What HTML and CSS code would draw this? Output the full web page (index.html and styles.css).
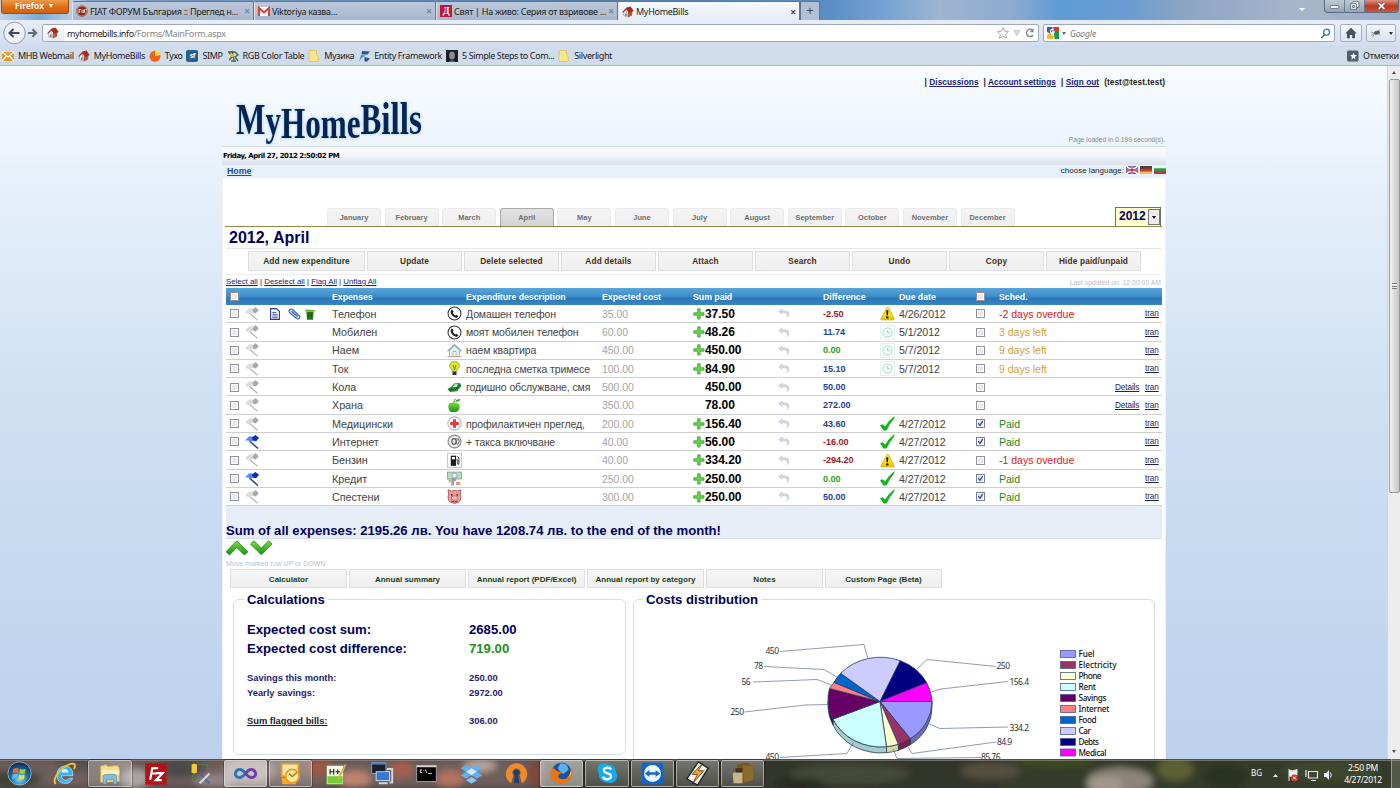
FILE: index.html
```html
<!DOCTYPE html>
<html lang="en">
<head>
<meta charset="utf-8">
<title>MyHomeBills</title>
<link rel="stylesheet" href="styles.css">
</head>
<body>
<svg class="defs" width="0" height="0">
  <defs>
    <linearGradient id="gGreen" x1="0" y1="0" x2="0" y2="1"><stop offset="0" stop-color="#7be03a"/><stop offset="1" stop-color="#16901a"/></linearGradient>
    <linearGradient id="gYellow" x1="0" y1="0" x2="0" y2="1"><stop offset="0" stop-color="#fff45a"/><stop offset="1" stop-color="#ecc400"/></linearGradient>
    <radialGradient id="gOrb" cx=".5" cy=".75" r=".7"><stop offset="0" stop-color="#6fe0f5"/><stop offset=".5" stop-color="#1f74ae"/><stop offset="1" stop-color="#0d2f57"/></radialGradient>
    <filter id="blur" x="-20%" y="-50%" width="140%" height="200%"><feGaussianBlur stdDeviation="3.5"/></filter>
    <symbol id="house" viewBox="0 0 12 12"><path d="M1 6 L4 4 L6 11 L2 10Z" fill="#e9edf2" stroke="#8d949c" stroke-width=".6"/><path d="M6 5 L10.5 5.5 L10 9.5 L6 11.5Z" fill="#b85a3a"/><path d="M.4 6 L4.5 1.6 L8.5 .6 L11.8 5 L7.5 7 L4.2 3.6 L1 7Z" fill="#a42d1c"/><path d="M3 7.5h1.6v2.6L3 9.8z" fill="#6e7a86"/></symbol>
    <symbol id="flagGrey" viewBox="0 0 15 14"><path d="M4.8 6.5 L12.5 13.3" stroke="#b4b4b4" stroke-width="1.2"/><path d="M0 5.4 L3.8 1.6 L7.6 1.2 L8 5.5 L3.4 7.3Z" fill="#dcdcdc"/><path d="M7.5 2.8 L10.6 0 L13.8 3.2 L10.8 6.5 L8 5.6Z" fill="#a9a9a9"/></symbol>
    <symbol id="flagBlue" viewBox="0 0 15 14"><path d="M4.6 6.3 L13 13.5" stroke="#24419e" stroke-width="1.5"/><path d="M0 5.4 L3.8 1.6 L7.6 1.2 L8.3 5.5 L4.6 7.8 L3.6 5.6Z" fill="#5b86f0"/><path d="M7 2.4 L10.4 0 L14 2.8 L11.2 6.3 L7.8 5.6Z" fill="#0a2bb4"/></symbol>
    <symbol id="phone" viewBox="0 0 16 16"><circle cx="8" cy="8" r="6.9" fill="#fff" stroke="#333" stroke-width="1.1"/><path d="M5.3 3.5 L7 5.8 L6.2 7 Q6.8 9 9 10.1 L10.2 9.4 L12.2 11.2 Q10.9 13.2 8.6 12.2 Q4.5 10.3 3.9 6.6 Q3.8 4.4 5.3 3.5Z" fill="#222"/></symbol>
    <symbol id="home" viewBox="0 0 15 14"><path d="M2.5 6.8 L7.5 2.3 L12.5 6.8 V13 H2.5Z" fill="#e4f4ea" stroke="#7db6a6" stroke-width=".8"/><path d="M.6 7.7 L7.5 1.2 L14.4 7.7" fill="none" stroke="#82aebd" stroke-width="1.3"/><path d="M6 8h3v5H6z" fill="#fff" stroke="#6c8a92" stroke-width=".6"/><path d="M.5 13.2h14" stroke="#e0a37c"/></symbol>
    <symbol id="bulb" viewBox="0 0 12 15"><path d="M6 .6 Q11 .8 10.9 4.9 Q10.6 7.2 8.4 9 V10.5 H3.6 V9 Q1.2 7.2 1.1 4.9 Q1 .8 6 .6Z" fill="#dbe935" stroke="#8c9a12" stroke-width=".7"/><path d="M4.5 4l1.5 5 1.5-5" fill="none" stroke="#5a5a10" stroke-width=".7"/><path d="M4 10.6h4v3.4H4z" fill="#333"/></symbol>
    <symbol id="car" viewBox="0 0 15 10"><path d="M.5 6.6 L4 4.6 L7 1 L13 .6 L14.5 3.6 L10 8.8 L3 9.4Z" fill="#278a32"/><path d="M5.4 4.4 L7.8 1.8 L11 1.5 L9.6 4.4Z" fill="#c8ecd0"/><path d="M2 7h3.6M7.5 7.8l5-4.5" stroke="#114d1b"/></symbol>
    <symbol id="apple" viewBox="0 0 14 15"><path d="M6.400 5 Q1 3.2 .8 8.400 Q1 13.7 4.6 14.2 L6.2 13.8 L8 14.2 Q12 12.8 12.200 8.400 Q11.5 3.600 6.4 5Z" fill="url(#gGreen)"/><path d="M6.3 5 Q6.5 2 8 .8" stroke="#5b6b20" fill="none"/><path d="M7.6 3.6 Q8.5 1 13 1 Q12 4.2 7.6 3.6Z" fill="#3d9c22"/></symbol>
    <symbol id="cross" viewBox="0 0 14 14"><circle cx="7" cy="7" r="6.2" fill="#fff" stroke="#b3b8bd"/><path d="M5.6 3h2.8v2.600h2.600v2.800H8.400v2.600H5.600V8.400H3V5.600h2.600z" fill="#e83a3a"/></symbol>
    <symbol id="atmark" viewBox="0 0 14 14"><circle cx="7" cy="7" r="6" fill="#ececec" stroke="#8a8a8a" stroke-width="1.1"/><ellipse cx="6.5" cy="7" rx="2" ry="2.7" fill="none" stroke="#555" stroke-width="1"/><path d="M9.3 3.900 L8.700 8.900 Q9.500 10.300 11 8.500 Q12 5.500 10 3.700" fill="none" stroke="#666" stroke-width=".9"/></symbol>
    <symbol id="pump" viewBox="0 0 14 14"><rect x=".5" y=".5" width="13" height="13" fill="#fff" stroke="#c9c9c9"/><path d="M3.500 2.500h5v9.500h-5z" fill="#1c1c1c"/><path d="M4.600 3.700h2.800v2.200H4.600z" fill="#fff"/><path d="M8.600 6.500h1.500v4h1V4.600L9.500 3" fill="none" stroke="#222" stroke-width=".8"/></symbol>
    <symbol id="credit" viewBox="0 0 14 14"><rect x=".4" y="1" width="13" height="6.500" fill="#b6dcc0" stroke="#6d9e80" stroke-width=".7"/><circle cx="7" cy="4.200" r="2.300" fill="#f0f6f0" stroke="#7a8ea8" stroke-width=".6"/><path d="M4 6.500h4.500V9L6.500 10v3.500H4z" fill="#91a3b8"/><path d="M1.500 8h2v2.500h-2zM8.500 10h4v3h-4z" fill="#dba066"/></symbol>
    <symbol id="pig" viewBox="0 0 15 15"><path d="M1 .8 L4.500 2 Q7.500 1 10.500 2 L14 .8 L13.400 5 Q15 11 11.500 13.300 Q7.500 15.500 3.500 13.300 Q0 11 1.600 5Z" fill="#ef9a96" stroke="#a34c4c" stroke-width=".8"/><circle cx="4.800" cy="5.800" r=".9" fill="#402020"/><circle cx="10.200" cy="5.800" r=".9" fill="#402020"/><ellipse cx="7.500" cy="9" rx="3.200" ry="2.100" fill="#f9c2be" stroke="#a34c4c" stroke-width=".6"/><path d="M4 12q3.500 1.800 7 0" fill="none" stroke="#943c3c"/></symbol>
    <symbol id="plus" viewBox="0 0 12 12"><path d="M4.700 .8h2.400v4H11v2.400H7.100V11H4.700V7.200H.8V4.800h3.900z" fill="#6ad648" stroke="#36a030" stroke-width=".8"/></symbol>
    <symbol id="undo" viewBox="0 0 12 11"><path d="M0 3.500 L4.600 .3 V2.300 Q11.500 2.200 11.400 6 Q11.200 9 7.700 10.600 Q10 7.500 8.600 6 Q7.400 4.900 4.600 5 V7Z" fill="#ccd6de"/></symbol>
    <symbol id="warn" viewBox="0 0 15 14"><path d="M7.200 .8 Q8 .4 8.600 1.300 L14.200 12 Q14.400 13.300 13 13.400 H1.700 Q.5 13.300 .9 12Z" fill="url(#gYellow)" stroke="#d4b000" stroke-width=".8"/><path d="M6.200 3.800h2.200L7.900 8.800H6.700z" fill="#1c1500"/><circle cx="7.300" cy="10.900" r="1.200" fill="#1c1500"/></symbol>
    <symbol id="clock" viewBox="0 0 15 15"><rect x=".5" y=".5" width="14" height="14" fill="#fcfffe" stroke="#e0f2eb"/><circle cx="7.500" cy="7.500" r="4.600" fill="#f3fcf8" stroke="#b8e2cd" stroke-width="1.200"/><path d="M7.500 5v2.700h2.800" fill="none" stroke="#a5d4bf"/></symbol>
    <symbol id="tick" viewBox="0 0 15 15"><path d="M0 9.600 Q1 8.400 2.800 8.200 L5.100 10.600 Q8.500 4.500 14.600 0 L14.200 2.600 Q9 8.500 6.900 14 Q5 15 3.600 14.500Z" fill="#12b51a"/></symbol>
    <symbol id="minitick" viewBox="0 0 8 8"><path d="M1.300 3.600 L3.400 6.200 L6.600 1" fill="none" stroke="#3c4a8c" stroke-width="1.400"/></symbol>
    <symbol id="doc" viewBox="0 0 10 12"><path d="M.6 .6H6.500L9.400 3.500V11.400H.6Z" fill="#fff" stroke="#29369c" stroke-width="1.100"/><path d="M2.300 4.500h4M2.300 6.300h5.300M2.300 8h5.300M2.300 9.700h5.300" stroke="#3d48c4" stroke-width=".9"/></symbol>
    <symbol id="clip" viewBox="0 0 13 12"><path d="M2.500 5.500 L8.500 10.500 Q11.500 11.800 12 8.500 L5 1.800 Q2.500 .2 1.200 2.200 Q.5 3.800 2.500 5.500Z" fill="#cfe0fb" stroke="#3e66c0" stroke-width="1.200"/><path d="M3.500 3.200 L9.500 8.500" stroke="#3e66c0" stroke-width="1.300"/></symbol>
    <symbol id="bin" viewBox="0 0 10 12"><path d="M1.300 3.500h7.400L8 11.700H2z" fill="#2c7c18"/><path d="M.2 1.500 L9.800 2 V3.600H.3Z" fill="#6eb82c"/><path d="M3.700 4.500v6M6 4.500v6" stroke="#145208" stroke-width=".9"/></symbol>
    <symbol id="note" viewBox="0 0 11 12"><path d="M.5 1 Q.5 .5 1 .5H7.500Q8 .5 8 1V5L9.800 6.500V11L9 11.500H1Q.5 11.500 .5 11Z" fill="#f9e68c" stroke="#d9be5c" stroke-width=".8"/></symbol>
  </defs>
</svg>

<div class="window">
  <div class="tabstrip">
    <div class="ffbutton">Firefox <i></i></div>
    <div class="btab first"><svg class="fav" viewBox="0 0 12 12"><circle cx="6" cy="6" r="5.700" fill="#8b2a16"/><circle cx="6" cy="6" r="5" fill="none" stroke="#e7d3cc" stroke-width=".6"/><path d="M3 4.500v3.500M3 4.500h1.600M3 6h1.300M6 4.500v3.500M7.300 8l.8-3.500.8 3.500M9.300 4.500h1.500" stroke="#fff" stroke-width=".8" fill="none"/></svg><span>FIAT ФОРУМ България :: Преглед н...</span><b>×</b></div>
    <div class="btab"><svg class="fav" viewBox="0 0 12 12"><rect y="2" width="12" height="9" fill="#fff"/><path d="M1 11V3l5 4.500L11 3v8" fill="none" stroke="#d93a34" stroke-width="1.900"/></svg><span>Viktoriya казва...</span><b>×</b></div>
    <div class="btab"><span class="fav dnevnik">Д</span><span>Свят | На живо: Серия от взривове ...</span><b>×</b></div>
    <div class="btab active"><svg class="fav"><use href="#house"/></svg><span>MyHomeBills</span><b>×</b></div>
    <div class="newtab">+</div>
    <div class="winctl"><i class="tri"></i><div class="wbtns"><span><svg viewBox="0 0 20 12"><rect x="5.500" y="5.500" width="9" height="3" rx=".5" fill="#fff" stroke="#687486"/></svg></span><span><svg viewBox="0 0 20 12"><path d="M8 1.500h6.500v6H12M6 3.500h6v6H6zM8 5.500h2v2H8z" fill="#fff" stroke="#5f6b7c"/></svg></span><span class="close"><svg viewBox="0 0 20 12"><path d="M7 3l6 6M13 3L7 9" stroke="#684040" stroke-width="3.200"/><path d="M7 3l6 6M13 3L7 9" stroke="#fff" stroke-width="2"/></svg></span></div></div>
  </div>
  <div class="toolbar">
    <svg class="navbtns" viewBox="0 0 42 24"><circle cx="14.500" cy="12" r="10.800" fill="#eef2f8" stroke="#8b98ad" stroke-width="1"/><path d="M9.500 12h10M13.500 8l-4 4 4 4" fill="none" stroke="#3f4a59" stroke-width="2"/><path d="M28 12h8M32.500 8.300l3.700 3.700-3.700 3.700" fill="none" stroke="#5d6a80" stroke-width="2"/></svg>
    <div class="urlbar"><span class="ubadge"><svg class="fav"><use href="#house"/></svg></span><span class="url">myhomebills.info<em>/Forms/MainForm.aspx</em></span>
      <svg class="uicons" viewBox="0 0 42 14"><path d="M7 1.500l1.600 3.700 4 .3-3 2.700 1 4L7 10l-3.600 2.200 1-4-3-2.700 4-.3z" fill="#fff" stroke="#a7adb5"/><path d="M18 4.500h6l-3 5z" fill="#dde1e6" stroke="#b5bac2" stroke-width=".8"/><path d="M36.500 4.300A3.600 3.600 0 1 0 37 9" fill="none" stroke="#858e9a" stroke-width="1.500"/><path d="M37.600 2v4.200h-4.200z" fill="#858e9a"/></svg></div>
    <div class="searchbar"><svg class="goog" viewBox="0 0 12 12"><rect width="12" height="12" rx="1" fill="#fff"/><path d="M6.500 0H12V4L9 5.500 6 3z" fill="#e03225"/><path d="M7 5.500L12 4v8H7.500z" fill="#16994b"/><path d="M0 0h5.500v5L3 6.500 0 5z" fill="#2f62cf"/><path d="M0 8l3-2 4 3-1 3H0z" fill="#f5bb20"/><path d="M6.500 2.500Q3 2 3.500 5 6 7 4.500 8" fill="none" stroke="#fff" stroke-width="1.300"/></svg><i class="caret"></i><span>Google</span><svg class="mag" viewBox="0 0 12 12"><circle cx="7.200" cy="4.500" r="3.200" fill="#fff" stroke="#3473bd" stroke-width="1.400"/><path d="M5 7L1.500 11" stroke="#3473bd" stroke-width="1.700"/></svg></div>
    <div class="tbtn home"><svg viewBox="0 0 12 12"><path d="M6 .8L11.800 6.500H10v4.700H7.200V8H4.800v3.200H2V6.500H.2z" fill="#47525f"/></svg></div>
    <div class="tbtn bug"><svg viewBox="0 0 14 12"><path d="M4 7Q5 3 9 3.500Q13 4 11 7Q7 9 4 7Z" fill="#555c63"/><path d="M1 5l4 1-4 3M5 7L3 11M9 7l3 1M8 4l4-2" fill="none" stroke="#858b91" stroke-width=".9"/></svg><u></u></div>
  </div>
  <div class="bookmarks">
    <span class="bm"><svg viewBox="0 0 12 12"><rect y="2" width="12" height="9" fill="#ea9a2c"/><path d="M0 2l6 5 6-5M0 11l4.500-5M12 11L7.500 6" fill="none" stroke="#fff" stroke-width="1.300"/></svg>MHB Webmail</span>
    <span class="bm"><svg><use href="#house"/></svg>MyHomeBills</span>
    <span class="bm"><svg viewBox="0 0 12 12"><circle cx="6" cy="6.300" r="5.500" fill="#f0641c"/><path d="M6 6.300V.500A5.800 5.800 0 0 1 11.600 5z" fill="#ffd62e"/></svg>Тухо</span>
    <span class="bm"><i class="sf">sf</i>SIMP</span>
    <span class="bm"><svg viewBox="0 0 12 12"><path d="M1 2h7l3 3-3 2 3 4M2 10l4-4-4-3M4 11h5M5 1l2 9" fill="none" stroke="#49603c" stroke-width="1.300"/><path d="M3 4h4v3H3z" fill="#c9c53c"/></svg>RGB Color Table</span>
    <span class="bm"><svg><use href="#note"/></svg>Музика</span>
    <span class="bm"><svg viewBox="0 0 12 12"><path d="M4 1l8 .5-2.500 3-6 0z" fill="#295b9e"/><path d="M3 5l5 .5L3.500 8 1 11.500z" fill="#4b8dd1"/><path d="M6.500 7L12 8.500 9 11.500H6.500z" fill="#285594"/></svg>Entity Framework</span>
    <span class="bm"><svg viewBox="0 0 12 12"><rect width="12" height="12" fill="#1b1d20"/><ellipse cx="6" cy="5.500" rx="2.900" ry="4" fill="#898d91"/><path d="M2.500 12q3.500-4 7 0z" fill="#5c6064"/></svg>5 Simple Steps to Com...</span>
    <span class="bm"><svg><use href="#note"/></svg>Silverlight</span>
    <span class="bm last"><svg viewBox="0 0 12 12"><rect y=".5" width="11.500" height="11" rx="1.500" fill="#515d6c"/><path d="M6.500 2.800l1 2.300 2.500.2-2 1.600.7 2.500-2.200-1.300-2.200 1.300.7-2.500-2-1.600 2.500-.2z" fill="#fff"/></svg>Отметки</span>
  </div>

  <div class="viewport">
    <div class="site">
      <div class="top">
        <div class="account"><span>| <a>Discussions</a></span><span>| <a>Account settings</a></span><span>| <a>Sign out</a></span><span class="mail">(test@test.test)</span></div>
        <svg class="logo" viewBox="0 0 200 52"><text class="logotext" x="6" y="39.500" font-size="44" textLength="186" lengthAdjust="spacingAndGlyphs">M<tspan dy="1.500">y</tspan><tspan dy="3">Home</tspan><tspan dy="-4.500">B</tspan><tspan font-size="47">ills</tspan></text></svg>
        <div class="loaded">Page loaded in 0.199 second(s).</div>
      </div>
      <div class="datebar">Friday, April 27, 2012 2:50:02 PM</div>
      <div class="homebar"><a>Home</a><span class="lang">choose language:
        <svg viewBox="0 0 12 8"><rect width="12" height="8" fill="#34439c"/><path d="M0 0l12 8M12 0L0 8" stroke="#fff" stroke-width="1.600"/><path d="M6 0v8M0 4h12" stroke="#fff" stroke-width="2.600"/><path d="M6 0v8M0 4h12" stroke="#cf2034" stroke-width="1.300"/></svg>
        <svg viewBox="0 0 12 8"><rect width="12" height="8" fill="#4a4242"/><rect y="2.700" width="12" height="5.300" fill="#d9301f"/><rect y="5.500" width="12" height="2.500" fill="#f2c05a"/></svg>
        <svg viewBox="0 0 12 8"><rect width="12" height="8" fill="#eef6ec"/><rect y="2.300" width="12" height="3.200" fill="#249a44"/><rect y="5" width="12" height="3" fill="#cf3228"/></svg></span></div>
      <div class="content">
        <div class="monthrow">
          <div class="months"><span>January</span><span>February</span><span>March</span><span class="on">April</span><span>May</span><span>June</span><span>July</span><span>August</span><span>September</span><span>October</span><span>November</span><span>December</span></div>
          <div class="year"><span>2012</span><i></i></div>
        </div>
        <h1>2012, April</h1>
        <div class="actions"><span class="wide">Add new expenditure</span><span>Update</span><span>Delete selected</span><span>Add details</span><span>Attach</span><span>Search</span><span>Undo</span><span>Copy</span><span>Hide paid/unpaid</span></div>
        <div class="selects"><span><a>Select all</a> | <a>Deselect all</a> | <a>Flag All</a> | <a>Unflag All</a></span><em>Last updated on: 12:00:00 AM</em></div>

        <div class="grid head"><i class="cb"></i><span></span><span></span><span>Expenses</span><span></span><span>Expenditure description</span><span>Expected cost</span><span class="sp2">Sum paid</span><span></span><span>Difference</span><span></span><span>Due date</span><i class="cb"></i><span>Sched.</span><span></span><span></span></div>

        <div class="grid row"><i class="cb"></i><svg class="fl"><use href="#flagGrey"/></svg><span class="tools"><svg class="t1"><use href="#doc"/></svg><svg class="t2"><use href="#clip"/></svg><svg class="t3"><use href="#bin"/></svg></span><span>Телефон</span><svg class="ic"><use href="#phone"/></svg><span class="desc">Домашен телефон</span><span class="cost">35.00</span><svg class="pl"><use href="#plus"/></svg><span class="sum">37.50</span><svg class="un"><use href="#undo"/></svg><span class="diff neg">-2.50</span><svg class="st"><use href="#warn"/></svg><span class="date">4/26/2012</span><i class="cb"></i><span class="late">-2 days overdue</span><a></a><a>tran</a></div>
        <div class="grid row"><i class="cb"></i><svg class="fl"><use href="#flagGrey"/></svg><span></span><span>Мобилен</span><svg class="ic"><use href="#phone"/></svg><span class="desc">моят мобилен телефон</span><span class="cost">60.00</span><svg class="pl"><use href="#plus"/></svg><span class="sum">48.26</span><svg class="un"><use href="#undo"/></svg><span class="diff">11.74</span><svg class="st"><use href="#clock"/></svg><span class="date">5/1/2012</span><i class="cb"></i><span class="left">3 days left</span><a></a><a>tran</a></div>
        <div class="grid row"><i class="cb"></i><svg class="fl"><use href="#flagGrey"/></svg><span></span><span>Наем</span><svg class="ic"><use href="#home"/></svg><span class="desc">наем квартира</span><span class="cost">450.00</span><svg class="pl"><use href="#plus"/></svg><span class="sum">450.00</span><svg class="un"><use href="#undo"/></svg><span class="diff zero">0.00</span><svg class="st"><use href="#clock"/></svg><span class="date">5/7/2012</span><i class="cb"></i><span class="left">9 days left</span><a></a><a>tran</a></div>
        <div class="grid row"><i class="cb"></i><svg class="fl"><use href="#flagGrey"/></svg><span></span><span>Ток</span><svg class="ic"><use href="#bulb"/></svg><span class="desc">последна сметка тримесе</span><span class="cost">100.00</span><svg class="pl"><use href="#plus"/></svg><span class="sum">84.90</span><svg class="un"><use href="#undo"/></svg><span class="diff">15.10</span><svg class="st"><use href="#clock"/></svg><span class="date">5/7/2012</span><i class="cb"></i><span class="left">9 days left</span><a></a><a>tran</a></div>
        <div class="grid row"><i class="cb"></i><svg class="fl"><use href="#flagGrey"/></svg><span></span><span>Кола</span><svg class="ic"><use href="#car"/></svg><span class="desc">годишно обслужване, смя</span><span class="cost">500.00</span><span></span><span class="sum">450.00</span><svg class="un"><use href="#undo"/></svg><span class="diff">50.00</span><span></span><span></span><i class="cb"></i><span></span><a>Details</a><a>tran</a></div>
        <div class="grid row"><i class="cb"></i><svg class="fl"><use href="#flagGrey"/></svg><span></span><span>Храна</span><svg class="ic"><use href="#apple"/></svg><span></span><span class="cost">350.00</span><span></span><span class="sum">78.00</span><svg class="un"><use href="#undo"/></svg><span class="diff">272.00</span><span></span><span></span><i class="cb"></i><span></span><a>Details</a><a>tran</a></div>
        <div class="grid row"><i class="cb"></i><svg class="fl"><use href="#flagGrey"/></svg><span></span><span>Медицински</span><svg class="ic"><use href="#cross"/></svg><span class="desc">профилактичен преглед,</span><span class="cost">200.00</span><svg class="pl"><use href="#plus"/></svg><span class="sum">156.40</span><svg class="un"><use href="#undo"/></svg><span class="diff">43.60</span><svg class="st"><use href="#tick"/></svg><span class="date">4/27/2012</span><i class="cb on"><svg><use href="#minitick"/></svg></i><span class="paid">Paid</span><a></a><a>tran</a></div>
        <div class="grid row"><i class="cb"></i><svg class="fl"><use href="#flagBlue"/></svg><span></span><span>Интернет</span><svg class="ic"><use href="#atmark"/></svg><span class="desc">+ такса включване</span><span class="cost">40.00</span><svg class="pl"><use href="#plus"/></svg><span class="sum">56.00</span><svg class="un"><use href="#undo"/></svg><span class="diff neg">-16.00</span><svg class="st"><use href="#tick"/></svg><span class="date">4/27/2012</span><i class="cb on"><svg><use href="#minitick"/></svg></i><span class="paid">Paid</span><a></a><a>tran</a></div>
        <div class="grid row"><i class="cb"></i><svg class="fl"><use href="#flagGrey"/></svg><span></span><span>Бензин</span><svg class="ic"><use href="#pump"/></svg><span></span><span class="cost">40.00</span><svg class="pl"><use href="#plus"/></svg><span class="sum">334.20</span><svg class="un"><use href="#undo"/></svg><span class="diff neg">-294.20</span><svg class="st"><use href="#warn"/></svg><span class="date">4/27/2012</span><i class="cb"></i><span class="late">-1 days overdue</span><a></a><a>tran</a></div>
        <div class="grid row"><i class="cb"></i><svg class="fl"><use href="#flagBlue"/></svg><span></span><span>Кредит</span><svg class="ic"><use href="#credit"/></svg><span></span><span class="cost">250.00</span><svg class="pl"><use href="#plus"/></svg><span class="sum">250.00</span><svg class="un"><use href="#undo"/></svg><span class="diff zero">0.00</span><svg class="st"><use href="#tick"/></svg><span class="date">4/27/2012</span><i class="cb on"><svg><use href="#minitick"/></svg></i><span class="paid">Paid</span><a></a><a>tran</a></div>
        <div class="grid row"><i class="cb"></i><svg class="fl"><use href="#flagGrey"/></svg><span></span><span>Спестени</span><svg class="ic"><use href="#pig"/></svg><span></span><span class="cost">300.00</span><svg class="pl"><use href="#plus"/></svg><span class="sum">250.00</span><svg class="un"><use href="#undo"/></svg><span class="diff">50.00</span><svg class="st"><use href="#tick"/></svg><span class="date">4/27/2012</span><i class="cb on"><svg><use href="#minitick"/></svg></i><span class="paid">Paid</span><a></a><a>tran</a></div>

        <div class="total">Sum of all expenses: 2195.26 лв. You have 1208.74 лв. to the end of the month!</div>
        <svg class="movers" viewBox="0 0 48 18"><path d="M0 12.800L10.800 1.800 22 12.800 18.300 16 10.800 8.500 3.500 16Z" fill="url(#gGreen)" stroke="#27811b" stroke-width=".8"/><path d="M24.500 5L28 1.800l7.300 7.300 7.400-7.300L46 5 35.300 15.800Z" fill="url(#gGreen)" stroke="#27811b" stroke-width=".8"/></svg>
        <div class="hint">Move marked row UP or DOWN</div>
        <div class="links"><span>Calculator</span><span>Annual summary</span><span>Annual report (PDF/Excel)</span><span>Annual report by category</span><span>Notes</span><span>Custom Page (Beta)</span></div>
        <div class="panels">
          <fieldset class="calc"><legend>Calculations</legend>
            <div class="big"><span>Expected cost sum:</span><span>2685.00</span></div>
            <div class="big"><span>Expected cost difference:</span><span class="green">719.00</span></div>
            <div class="small gap1"><span>Savings this month:</span><span>250.00</span></div>
            <div class="small"><span>Yearly savings:</span><span>2972.00</span></div>
            <div class="small gap2"><span class="flagged">Sum flagged bills:</span><span>306.00</span></div>
          </fieldset>
          <fieldset class="dist"><legend>Costs distribution</legend>
            <svg class="chart" viewBox="634 607 520 160">
              <g stroke="#2b3a63" stroke-width=".8">
                <path d="M932 701.500 A52 45.500 0 0 1 910.300 738.700 V744.700 A52 45.500 0 0 0 932 707.500Z" fill="#6b6bc0"/>
                <path d="M910.300 738.700 A52 45.500 0 0 1 898.300 744.300 V750.300 A52 45.500 0 0 0 910.300 744.700Z" fill="#7a1f4a"/>
                <path d="M898.300 744.300 A52 45.500 0 0 1 886.500 746.700 V752.700 A52 45.500 0 0 0 898.300 750.300Z" fill="#d9d9a0"/>
                <path d="M886.500 746.700 A52 45.500 0 0 1 833 719 V725 A52 45.500 0 0 0 886.500 752.700Z" fill="#a3cccc"/>
                <path d="M833 719 A52 45.500 0 0 1 828 701.500 V707.500 A52 45.500 0 0 0 833 725Z" fill="#400040"/>
                <path d="M880 701.500 L932 701.500 A52 45.500 0 0 1 910.300 738.700Z" fill="#9999ff"/>
                <path d="M880 701.500 L910.300 738.700 A52 45.500 0 0 1 898.300 744.300Z" fill="#993366"/>
                <path d="M880 701.500 L898.300 744.300 A52 45.500 0 0 1 886.500 746.700Z" fill="#ffffcc"/>
                <path d="M880 701.500 L886.500 746.700 A52 45.500 0 0 1 833 719Z" fill="#ccffff"/>
                <path d="M880 701.500 L833 719 A52 45.500 0 0 1 829.500 688.500Z" fill="#660066"/>
                <path d="M880 701.500 L829.500 688.500 A52 45.500 0 0 1 834 682.300Z" fill="#ff8080"/>
                <path d="M880 701.500 L834 682.300 A52 45.500 0 0 1 840.700 673.300Z" fill="#0066cc"/>
                <path d="M880 701.500 L840.700 673.300 A52 45.500 0 0 1 900.300 660.700Z" fill="#ccccff"/>
                <path d="M880 701.500 L900.300 660.700 A52 45.500 0 0 1 926.700 682.700Z" fill="#000080"/>
                <path d="M880 701.500 L926.700 682.700 A52 45.500 0 0 1 932 701.500Z" fill="#ff00ff"/>
              </g>
              <g fill="none" stroke="#7380a0" stroke-width=".8">
                <path d="M780 651.500L864 644.500 867.500 657.500M764 666.500L824 669.500 837 677M753 682L817 679.500 831.500 685M744.500 712L805 705 828 704.500M780 757.500L847 753.500 853.500 742.500M996 666.500L927 659.500 917 669M1008 681.500L941 689 931.500 692M1008 727L940 728.500 929 724M996 742L912 753.500 907.500 746M981 757.500L897 758.500 893 749"/>
              </g>
              <g class="plabels">
                <text x="765.500" y="654" textLength="13.500">450</text><text x="754" y="669" textLength="9">78</text><text x="741.500" y="684.500" textLength="9">56</text><text x="730.500" y="715" textLength="13.500">250</text><text x="765.500" y="760" textLength="13.500">450</text>
                <text x="996.500" y="669" textLength="13.500">250</text><text x="1009.500" y="684.500" textLength="19.500">156.4</text><text x="1009.500" y="730.500" textLength="19.500">334.2</text><text x="997" y="745" textLength="15">84.9</text><text x="981" y="760" textLength="19.500">85.76</text>
              </g>
              <g stroke="#4a5c8c" stroke-width=".8">
                <rect x="1060.500" y="650.500" width="15" height="7" fill="#9999ff"/><rect x="1060.500" y="661.500" width="15" height="7" fill="#993366"/><rect x="1060.500" y="672.500" width="15" height="7" fill="#ffffcc"/><rect x="1060.500" y="683.500" width="15" height="7" fill="#ccffff"/><rect x="1060.500" y="694.500" width="15" height="7" fill="#660066"/><rect x="1060.500" y="705.500" width="15" height="7" fill="#ff8080"/><rect x="1060.500" y="716.500" width="15" height="7" fill="#0066cc"/><rect x="1060.500" y="727.500" width="15" height="7" fill="#ccccff"/><rect x="1060.500" y="738.500" width="15" height="7" fill="#000080"/><rect x="1060.500" y="749" width="15" height="7" fill="#ff00ff"/>
              </g>
              <g class="plegend">
                <text x="1078.500" y="657.200" textLength="16">Fuel</text><text x="1078.500" y="668.200" textLength="38">Electricity</text><text x="1078.500" y="679.200" textLength="23">Phone</text><text x="1078.500" y="690.200" textLength="17.500">Rent</text><text x="1078.500" y="701.200" textLength="28">Savings</text><text x="1078.500" y="712.200" textLength="31">Internet</text><text x="1078.500" y="723.200" textLength="18">Food</text><text x="1078.500" y="734" textLength="12.500">Car</text><text x="1078.500" y="745" textLength="20.500">Debts</text><text x="1078.500" y="756" textLength="28">Medical</text>
              </g>
            </svg>
          </fieldset>
        </div>
        <div class="nextpanel">Budget</div>
      </div>
    </div>
    <div class="scroll"><i class="up"></i><div class="thumb"><u></u></div><i class="down"></i></div>
  </div>

  <div class="taskbar">
    <svg class="wall" viewBox="0 0 1400 29" preserveAspectRatio="none"><rect width="1400" height="29" fill="#45403c"/><g filter="url(#blur)">
      <rect x="-10" y="0" width="560" height="29" fill="#6d5f5c"/><rect x="540" y="-5" width="460" height="40" fill="#33352b"/><rect x="1000" y="-5" width="410" height="40" fill="#353a29"/>
      <ellipse cx="12" cy="20" rx="30" ry="8" fill="#3e4336"/><ellipse cx="85" cy="6" rx="30" ry="6" fill="#57504e"/><ellipse cx="135" cy="20" rx="14" ry="10" fill="#aba3a4"/><ellipse cx="180" cy="10" rx="25" ry="9" fill="#4b494a"/><ellipse cx="215" cy="22" rx="20" ry="7" fill="#8f8584"/><ellipse cx="250" cy="12" rx="26" ry="10" fill="#9a8580"/><ellipse cx="320" cy="8" rx="14" ry="9" fill="#9c5845"/><ellipse cx="355" cy="20" rx="16" ry="8" fill="#c08571"/><ellipse cx="402" cy="10" rx="12" ry="9" fill="#a55f4b"/><ellipse cx="450" cy="20" rx="14" ry="9" fill="#b4745e"/><ellipse cx="480" cy="6" rx="16" ry="7" fill="#b9a39a"/><ellipse cx="535" cy="15" rx="8" ry="14" fill="#7e4a3b"/>
      <ellipse cx="850" cy="15" rx="60" ry="10" fill="#454a38"/><ellipse cx="800" cy="25" rx="25" ry="6" fill="#272a20"/><ellipse cx="990" cy="12" rx="30" ry="8" fill="#575040"/><ellipse cx="1055" cy="2" rx="40" ry="6" fill="#3c4b22"/><ellipse cx="1120" cy="22" rx="33" ry="13" fill="#8d8578"/><ellipse cx="1105" cy="26" rx="18" ry="8" fill="#a39a8b"/><ellipse cx="1175" cy="10" rx="18" ry="12" fill="#5c6131"/><ellipse cx="1225" cy="18" rx="22" ry="12" fill="#2b3220"/><ellipse cx="1330" cy="12" rx="50" ry="10" fill="#3d472d"/></g><path d="M0 .5H1400" stroke="#4d4d4d"/><path d="M0 1.500H1400" stroke="#a8a4a0" stroke-opacity=".5"/></svg>
    <div class="apps">
      <span><svg viewBox="0 0 28 28"><circle cx="14" cy="14" r="13" fill="url(#gOrb)" stroke="#b4c6d6" stroke-width=".8"/><path d="M7 9q3-2 6-.4l-.6 5q-3-1.400-6 0z" fill="#ef6a32"/><path d="M14.300 8.800q3 1.500 6.400 0l-.7 5q-3 1.300-6.200 0z" fill="#9fce3d"/><path d="M6.200 15q3-1.500 6 0l-.7 5q-3-1.300-5.800.3z" fill="#64b6f0"/><path d="M13.600 15.200q3 1.400 6.200 0l-.7 5q-3 1.300-6.200 0z" fill="#ffd23f"/></svg></span>
      <span><svg viewBox="0 0 28 28"><path d="M23.500 16.500H10.500q.5 5 5 5 2.800 0 4-2.300h3.600q-2.200 6.300-8.200 6Q5.500 25 5.500 15.500 6 6 14.500 5.500q9.300.5 9 11z" fill="#3cb0ee" stroke="#d4effc" stroke-width=".7"/><path d="M10.500 13q.7-4 4-4T18.800 13z" fill="#d9f2ff"/><path d="M4 26Q0 20 10 10 20 1 25 3.500q1.500 2-.5 5.500" fill="none" stroke="#f3c532" stroke-width="2.200"/></svg></span>
      <span class="run"><svg viewBox="0 0 28 28"><path d="M4 6l6-2 2 2 11-1 2 3v15l-21 1z" fill="#f3dc8a" stroke="#c6a85c" stroke-width=".7"/><path d="M5 10h20v5H5z" fill="#fcf0b8"/><path d="M7 18q0-3 3-3h9q3 0 3 3v8h-3.500v-5h-8v5H7z" fill="#7fbce0" stroke="#4c86ac" stroke-width=".7"/></svg></span>
      <span><svg viewBox="0 0 28 28"><rect x="3" y="3" width="23" height="23" fill="#b31217" stroke="#b31217" stroke-width="1.500" stroke-dasharray="1.500 1"/><path d="M8 21l2.500-13H17M9.500 14h6M15 13.500h7L14.500 21.500H21" fill="none" stroke="#fff" stroke-width="2.500"/></svg></span>
      <span><svg viewBox="0 0 28 28"><path d="M4 4q3-2 6 0v9q-3 2-6 0z" fill="#f5c92f"/><path d="M12 4h10v9M5 16v7h9" fill="none" stroke="#43a33c" stroke-dasharray="2 1.500"/><path d="M13 14l11 11" stroke="#456ba5" stroke-width="2.400"/><path d="M24 14L13 25" stroke="#d5dae0" stroke-width="2.400"/></svg></span>
      <span class="run lit"><svg viewBox="0 0 28 28"><path d="M14 14q-5-7-9.500-3.500-4 4 0 7.300Q9 20.500 14 14" fill="none" stroke="#2775bd" stroke-width="3.200"/><path d="M14 14q5-7 9.500-3.500 4 4 0 7.300Q19 20.500 14 14" fill="none" stroke="#6a3fa6" stroke-width="3.200"/></svg></span>
      <span class="run"><svg viewBox="0 0 28 28"><rect x="4" y="3" width="19" height="14" fill="#f7e3b0" stroke="#e59a26" stroke-width="2"/><path d="M4 19l18-2-2 9H5z" fill="#f7a92f"/><circle cx="16" cy="17" r="7.500" fill="#ffe9a0" stroke="#e7a01d" stroke-width="2"/><path d="M12.500 14l3.500 3.500L21 13" fill="none" stroke="#a86d0c" stroke-width="1.500"/></svg></span>
      <span><svg viewBox="0 0 28 28"><rect x="4" y="5" width="19" height="21" fill="#f1f6e6" stroke="#789150"/><rect x="5" y="17" width="17" height="8" fill="#79cc36"/><path d="M5 4.500h18" stroke="#8a8a8a" stroke-width="1.500" stroke-dasharray="1.500 1.500"/><path d="M8 9v6M8 12h4M12 9v6M14 12h5M16.500 9.500v5" stroke="#222" stroke-width="1.300"/><path d="M25 4L17 21" stroke="#dfb438" stroke-width="2.200"/></svg></span>
      <span><svg viewBox="0 0 28 28"><rect x="3" y="2" width="16" height="12" fill="#17202c" stroke="#8ea6c8"/><path d="M3 3h16" stroke="#4c86cc" stroke-width="2"/><rect x="8" y="12" width="15" height="10" fill="#3278d4" stroke="#d4dee8"/><path d="M11 25h10M20 9h6v15h-3" stroke="#cbd6e0" stroke-width="2.200" fill="none"/></svg></span>
      <span><svg viewBox="0 0 28 28"><rect x="3" y="5" width="22" height="18" fill="#050505" stroke="#a3a3a3"/><path d="M3 6h22" stroke="#d7d7d7" stroke-width="2"/><path d="M9 10H7v3h2M11 10.500v.8M11 13v.5M12.500 9.500l2 4M16 14h4" fill="none" stroke="#fff" stroke-width=".9"/></svg></span>
      <span><svg viewBox="0 0 28 28"><path d="M8 4l6 4-6 4-6-4zM20 4l6 4-6 4-6-4zM8 12l6 4-6 4-6-4zM20 12l6 4-6 4-6-4z" fill="#64b1ef"/><path d="M14 17.500l6 4-6 4-6-4z" fill="#8ac8f7"/><path d="M14 8l6 4-6 4-6-4z" fill="#d1e9fb"/></svg></span>
      <span><svg viewBox="0 0 28 28"><path d="M8 25A12 12 0 1 1 20 25L17.500 16A4.500 4.500 0 1 0 10.500 16Z" fill="#ee8b2c"/><circle cx="14" cy="13" r="3.500" fill="#243f66"/><path d="M12.300 15h3.400l1.500 10h-6.400z" fill="#243f66"/></svg></span>
      <span class="run lit"><svg viewBox="0 0 28 28"><circle cx="14" cy="13.500" r="11.500" fill="#214f9c"/><path d="M13 2.500q8 0 9 7l-6 5q-5-3-6-7z" fill="#58b3ea"/><path d="M4.500 6q-6.500 11 .5 16.500 9 6.500 17 0 6-6.500 3.500-16.500.5 12-6.500 14-7 1.500-9-3 1.500-2.500 5-4-6-1-8-3.500-2.500-1-2.500-3.500z" fill="#ee7416"/><path d="M24.500 8q0 9-6 12 9-3 6-12z" fill="#ffc62e"/></svg></span>
      <span class="run"><svg viewBox="0 0 28 28"><path d="M6 3q4-2 8 .5 9 0 10 10 2 4-.5 8-3.500 5-9 2.500-10 .5-10.500-10Q1.500 6 6 3z" fill="#17a9e8"/><path d="M18 9.500q-1.500-2.500-5-2-3.500.8-3 3.500.5 2 4 2.800 4.500 1 4 3.700-1 3-4.500 3-3.700-.2-4.500-3" fill="none" stroke="#fff" stroke-width="2.600"/></svg></span>
      <span class="run"><svg viewBox="0 0 28 28"><rect x="2" y="2" width="24" height="24" rx="2" fill="#1167c9"/><circle cx="14" cy="14" r="9.500" fill="#eef6ff"/><path d="M5.500 14l5-4v2.500h7V10l5 4-5 4v-2.500h-7V18z" fill="#1769c6"/></svg></span>
      <span class="run"><svg viewBox="0 0 28 28"><path d="M15 1l11 7-12 19L2 20z" fill="#f0f0f0" stroke="#222" stroke-width="1.500"/><path d="M20 2L8 15h6L8 26l13-15h-6z" fill="#f7a41e" stroke="#402a08" stroke-width=".8"/></svg></span>
      <span class="run"><svg viewBox="0 0 28 28"><path d="M8 4l10-2 8 3v17l-16 3z" fill="#765521"/><path d="M14 5l12 0v16l-10 3z" fill="#8c6a2c"/><path d="M3 14q5-4 11-2v13H4z" fill="#c7b58b"/><path d="M6 8h8v5H6z" fill="#44331b"/></svg></span>
    </div>
    <div class="tray"><span class="bg">BG</span><svg viewBox="0 0 62 14"><path d="M2 9h5l-2.500-3z" fill="#e8e8e8"/><path d="M18 1v12M18 2q3 2 8-.5v6q-4 2-8 .5" fill="#eee" stroke="#e4e4e4"/><circle cx="23.500" cy="10" r="3.400" fill="#d32e26"/><path d="M22 8.500l3 3M25 8.500l-3 3" stroke="#fff"/><path d="M37.500 3.500h9v6.500h-9zM40 12.500h5M35 2v7" fill="none" stroke="#e8e8e8" stroke-width="1.200"/><path d="M53 5h2l3-3v10l-3-3h-2z" fill="#eee"/><path d="M59.500 4.500q1.500 2.500 0 5" stroke="#eee" fill="none"/></svg><div class="clockt"><span>2:50 PM</span><span>4/27/2012</span></div><i class="peek"></i></div>
  </div>
</div>
</body>
</html>
```
FILE: styles.css
```css
* { box-sizing: border-box; }
body { margin: 0; width: 1400px; height: 788px; overflow: hidden; font-family: "Liberation Sans", Arial, sans-serif; }
.defs { position: absolute; }
i { font-style: normal; }
svg { display: block; flex: none; }
.window { width: 1400px; height: 788px; display: flex; flex-direction: column; overflow: hidden; }

/* browser chrome */
.tabstrip { height: 20px; display: flex; align-items: flex-start; background: linear-gradient(90deg, #c0d3e8 0, #79abd9 40px, #b9cde5 72px, #7e9fc6 90px, #557da5 600px, #5a8fc4 830px, #78a5d4 890px, #9fb4d0 940px, #8fabd0 1010px, #5f9bd6 1060px, #6a9dd2 1130px, #8ba4c4 1180px, #a8b6ca 1300px, #98adc6 1400px); font: 9px "Noto Sans", sans-serif; color: #1a1a1a; }
.ffbutton { width: 68px; height: 14px; margin-left: 1px; background: linear-gradient(#ee9a4a, #dd6a10 60%, #d2640c); border: 1px solid #9d4d12; border-top: 0; border-radius: 0 0 3px 3px; color: #fff; font-weight: 600; font-size: 8.500px; line-height: 12px; padding-left: 13px; letter-spacing: .1px; display: flex; gap: 5px; }
.ffbutton i { border: 2.500px solid transparent; border-top: 4px solid #fff; margin-top: 4px; height: 0; }
.btab { width: 182px; height: 19px; margin-top: 1px; background: linear-gradient(#bcc8db, #a9b7cd); border: 1px solid #66758e; border-bottom: 0; border-left-color: #e0e6ee; border-radius: 2px 2px 0 0; display: flex; align-items: center; padding: 0 3px; white-space: nowrap; }
.btab.first { margin-left: 3px; }
.btab .fav { margin-right: 2px; }
.btab span { letter-spacing: -.3px; }
.btab b { margin-left: auto; font-size: 10px; color: #76829a; }
.btab.active { background: linear-gradient(#f5f8fc, #e6ecf6); height: 20px; }
.btab.active b { color: #444; }
.fav { width: 12px; height: 12px; flex: none; }
.dnevnik { background: #c0173a; color: #fff; text-align: center; font: bold 10px/12px "Liberation Serif", serif; }
.newtab { width: 20px; height: 19px; margin-top: 1px; background: #b4c1d5; border: 1px solid #66758e; border-bottom: 0; text-align: center; font-size: 13px; line-height: 17px; color: #3d4859; }
.winctl { margin-left: auto; display: flex; align-items: flex-start; }
.tri { border: 3px solid transparent; border-top-color: #fff; margin: 8px 19px 0 0; }
.wbtns { display: flex; height: 13px; margin-right: 1px; border: 1px solid #5c6c83; border-top: 0; border-radius: 0 0 4px 4px; background: linear-gradient(#bfc9d7, #97a5b9); overflow: hidden; }
.wbtns span { width: 20px; border-right: 1px solid #6c7b91; }
.wbtns svg { width: 19px; height: 12px; }
.wbtns .close { width: 33px; border: 0; background: linear-gradient(#dd9284, #bb3a22 50%, #cc5838); padding-left: 7px; }
.toolbar { height: 26px; background: linear-gradient(#e7edf6, #d3ddee); display: flex; align-items: center; padding-right: 4px; }
.navbtns { width: 42px; height: 24px; }
.urlbar { width: 997px; height: 18px; border: 1px solid #9caac0; background: #fff; border-radius: 2px; display: flex; align-items: center; font: 9px "Noto Sans", sans-serif; color: #222; }
.ubadge { width: 21px; height: 16px; padding: 2px 4px; background: linear-gradient(#fff, #e9edf3); border-right: 1px solid #eee; margin-right: 3px; }
.url { letter-spacing: -.4px; }
.url em { font-style: normal; color: #868686; letter-spacing: -.33px; }
.uicons { width: 42px; height: 14px; margin-left: auto; }
.searchbar { width: 292px; height: 18px; border: 1px solid #9caac0; background: #fff; border-radius: 2px; margin-left: 4px; display: flex; align-items: center; padding: 0 3px 0 3px; font: italic 8.500px "Noto Sans", sans-serif; color: #777; letter-spacing: -.1px; }
.goog, .mag { width: 12px; height: 12px; }
.mag { margin-left: auto; width: 11px; height: 11px; }
.caret { border: 2px solid transparent; border-top: 3px solid #667; margin: 2px 4px 0 3px; }
.tbtn { height: 18px; border: 1px solid #a3b0c4; border-radius: 2px; background: linear-gradient(#f4f7fb, #dbe3ef); display: flex; align-items: center; justify-content: center; }
.home { width: 22px; margin-left: 5px; }
.home svg, .bug svg { width: 12px; height: 12px; }
.bug { width: 30px; margin-left: 4px; gap: 7px; margin-right: -2px; }
.bug u { border: 2px solid transparent; border-top: 3px solid #333; margin-top: 2px; }
.bookmarks { height: 20px; background: #d0dbec; border-bottom: 1px solid #aab7ca; display: flex; align-items: center; padding: 0 2px; font: 9px "Noto Sans", sans-serif; letter-spacing: -.39px; color: #1b1b1b; }
.bm { display: flex; align-items: center; gap: 4px; margin-right: 4px; white-space: nowrap; }
.bm svg { width: 12px; height: 12px; }
.sf { width: 12px; height: 12px; border-radius: 2px; background: #27618c; color: #fff; font: bold 7px/11px "Noto Sans", sans-serif; text-align: center; }
.last { margin-left: auto; margin-right: -1px; letter-spacing: -.2px; }

/* page */
.viewport { height: 693px; display: flex; justify-content: flex-end; background: linear-gradient(#f9fcff 0, #e6f0fa 120px, #cfe0f3 330px, #bdd1ec 693px); overflow: hidden; }
.site { width: 944px; margin-right: 221px; height: 693px; display: flex; flex-direction: column; }
.top { height: 80px; flex: none; position: relative; }
.account { display: flex; justify-content: flex-end; gap: 5px; padding: 10px 1px 0 0; font-size: 8.300px; font-weight: bold; line-height: 12px; color: #222; letter-spacing: .04px; }
.account a { color: #1b1b80; text-decoration: underline; }
.logo { position: absolute; left: 8px; top: 28px; width: 200px; height: 52px; overflow: visible; }
.logotext { font-family: "Liberation Serif", serif; font-weight: bold; fill: #042550; filter: drop-shadow(0 0 1.500px #9cc4f5); }
.loaded { position: absolute; right: 1px; bottom: 1px; font-size: 6.700px; line-height: 10px; color: #8b8b8b; }
.datebar { height: 19px; flex: none; border-top: 1px solid #d3dce7; background: linear-gradient(#f9fbfd, #f2f5fa 50%, #d9e0e9); font: bold 7px/18px "DejaVu Sans", sans-serif; letter-spacing: -.45px; color: #000; padding-left: 1px; }
.homebar { height: 13px; flex: none; background: #e6f1fa; display: flex; justify-content: space-between; padding-left: 5px; font-size: 8.800px; line-height: 12px; }
.homebar a { font-weight: bold; color: #24489c; text-decoration: underline; }
.lang { display: flex; gap: 2px; color: #222; font-size: 8px; }
.lang svg { width: 12px; height: 8px; margin-top: 1px; }
.content { flex: none; height: 581px; background: #fff; padding: 0 4px 0 3px; border-left: 1px solid #eff3f8; border-right: 1px solid #eff3f8; overflow: hidden; }
.monthrow { height: 49px; margin: 0 -1px; border-bottom: 1px solid #8f8a48; display: flex; align-items: flex-end; padding-left: 102px; }
.months { display: flex; gap: 3.600px; }
.months span { width: 54px; height: 18px; border: 1px solid #ebebeb; border-bottom: 0; border-radius: 3px 3px 0 0; background: linear-gradient(#f4f4f4, #efefef); font-size: 7.400px; font-weight: bold; line-height: 17px; text-align: center; color: #6f6f6f; letter-spacing: .05px; }
.months .on { background: linear-gradient(#e3e3e3, #d3d3d3); border-color: #a9a9a9; }
.year { margin: 0 1px 0 auto; width: 46px; height: 19px; background: #ffffcf; border: 1px solid #6e6e6e; border-bottom: 0; display: flex; color: #000066; font-size: 12px; font-weight: bold; line-height: 17px; padding-left: 3px; }
.year i { width: 12px; height: 16px; margin: 1px 0 0 2px; border: 1px solid #777; background: #ececec; display: flex; }
.year i::before { content: ""; border: 2.500px solid transparent; border-top: 3.500px solid #000; margin: 6px auto 0; height: 0; }
h1 { margin: 0; height: 22px; padding-left: 3px; font-size: 16px; line-height: 22px; color: #000058; border-bottom: 1px solid #e6e6e6; }
.actions { height: 26px; border-bottom: 1px solid #ececec; display: flex; gap: 2px; padding: 2px 0 0 22px; }
.actions span, .links span { border: 1px solid #dedede; background: linear-gradient(#f5f5f5, #efefef); text-align: center; font-size: 8px; font-weight: bold; }
.actions span { width: 95px; height: 20px; line-height: 19px; font-size: 8.300px; color: #4a2c10; letter-spacing: .14px; }
.actions .wide { width: 117px; color: #154015; }
.selects { height: 13px; display: flex; justify-content: space-between; font-size: 7.850px; line-height: 13px; color: #222; }
.selects a, .row a { color: #1d1d70; text-decoration: underline; }
.selects em { font-style: normal; color: #b0bdd6; font-size: 6.850px; line-height: 15px; }
.grid { display: grid; grid-template-columns: 19px 25px 62px 115px 19px 136px 91px 12px 73px 45px 57px 19px 77px 23px 116px 30px 17px; align-items: center; white-space: nowrap; margin-right: -1px; }
.head { height: 17px; background: linear-gradient(#5aa6da, #3d8ccb 50%, #2b77b5 60%, #3786c4); color: #fff; font-size: 8.800px; letter-spacing: -.05px; font-weight: bold; }
.sp2 { grid-column: span 2; }
.row { height: 18.300px; border-bottom: 1px solid #cfcfcf; font-size: 10.800px; letter-spacing: -.05px; color: #444; padding-top: .500px; }
.cb { display: block; width: 9px; height: 9px; margin-left: 4px; border: 1px solid #8f9399; background: #e9eaec; box-shadow: inset 0 0 0 1px #fff; }
.grid .cb:nth-last-child(4) { margin-left: 0; }
.cb.on { background: #e0e5f5; border-color: #777fa0; }
.cb svg { width: 7px; height: 7px; }
.fl { width: 15px; height: 14px; }
.tools { display: flex; align-items: center; }
.t1 { width: 10px; height: 12px; }
.t2 { width: 13px; height: 12px; margin-left: 8px; }
.t3 { width: 10px; height: 12px; margin-left: 4px; }
.ic { width: 15px; height: 15px; }
.desc { font-size: 10.500px; letter-spacing: -.1px; }
.cost { color: #a5a5a5; font-size: 10.500px; }
.pl { width: 12px; height: 12px; }
.sum { font-size: 12px; font-weight: bold; color: #000; }
.un { width: 12px; height: 11px; }
.diff { font-size: 9.100px; font-weight: bold; color: #1d3fa0; }
.diff.neg { color: #a3161c; }
.diff.zero { color: #27a022; }
.st { width: 15px; height: 15px; }
.date { font-size: 10.600px; }
.late, .left, .paid { font-size: 10.600px; }
.late { color: #e01818; }
.left { color: #d3a135; }
.paid { color: #188a18; }
.row a { font-size: 8.200px; letter-spacing: -.1px; }
.total { height: 33px; background: #e6edf7; border-bottom: 1px solid #d5e0ef; margin-right: -1px; font-size: 13.130px; font-weight: bold; line-height: 50px; color: #000060; overflow: hidden; }
.movers { width: 48px; height: 18px; }
.hint { font-size: 7px; line-height: 14px; height: 12px; color: #b3c2da; }
.links { display: flex; gap: 2px; padding-left: 4px; }
.links span { width: 117px; height: 19px; line-height: 19px; color: #154015; letter-spacing: .02px; }
.panels { display: flex; gap: 7px; padding: 4px 0 0 7px; }
fieldset { margin: 0; border: 1px solid #d5dfea; border-radius: 6px; min-width: 0; }
legend { font-size: 13.100px; line-height: 15px; font-weight: bold; color: #000058; padding: 0 3px; }
.calc { width: 393px; height: 163px; padding: 13px 0 0 13px; }
.calc legend { margin-left: -3px; }
.dist { width: 522px; height: 200px; padding: 0; }
.dist legend { margin-left: 9px; }
.big, .small { display: grid; grid-template-columns: 222px 1fr; font-weight: bold; }
.big { font-size: 13.150px; line-height: 19px; color: #000058; }
.small { font-size: 9.350px; line-height: 15px; color: #1c1c70; }
.green { color: #1c901c; }
.gap1 { margin-top: 13px; }
.gap2 { margin-top: 13px; }
.flagged { color: #222; text-decoration: underline; }
.chart { width: 520px; height: 160px; }
.plabels { font: 8.500px "Noto Sans", sans-serif; fill: #333; }
.plegend { font: 500 8.200px "Noto Sans", sans-serif; fill: #111; }
.nextpanel { margin: -36px 0 0 20px; font-size: 13px; line-height: 15px; font-weight: bold; color: #000058; }

.scroll { width: 13px; background: #ededed; border-left: 1px solid #d5d5d5; display: flex; flex-direction: column; align-items: center; flex: none; }
.up, .down { height: 13px; display: flex; align-items: center; }
.up::before { content: ""; border: 2.500px solid transparent; border-bottom: 3.500px solid #555; margin-bottom: 3px; }
.down { margin-top: auto; }
.down::before { content: ""; border: 2.500px solid transparent; border-top: 3.500px solid #555; }
.thumb { width: 11px; height: 414px; border: 1px solid #999; border-radius: 2px; background: linear-gradient(90deg, #f5f5f5, #dadada 50%, #c6c6c6); display: flex; align-items: center; justify-content: center; }
.thumb u { width: 5px; height: 6px; background: repeating-linear-gradient(#777 0 1px, #eee 1px 2.500px); }

/* desktop taskbar */
.taskbar { height: 29px; position: relative; display: flex; justify-content: space-between; }
.wall { position: absolute; left: 0; top: 0; width: 1400px; height: 29px; }
.apps { position: relative; display: flex; margin-left: -3px; }
.apps span { width: 45.200px; height: 29px; display: flex; align-items: center; justify-content: center; }
.apps svg { width: 25px; height: 25px; }
.apps .run { width: 43.200px; height: 27px; margin: 1px 1px 0; border: 1px solid rgba(230,230,230,.55); border-radius: 2px; background: linear-gradient(rgba(255,255,255,.32), rgba(255,255,255,.14)); box-shadow: 0 0 0 .500px rgba(0,0,0,.5); }
.apps .lit { background: linear-gradient(rgba(255,255,255,.55), rgba(255,255,255,.45)); }
.tray { position: relative; display: flex; align-items: center; color: #fff; font: 8.500px "Noto Sans", sans-serif; }
.bg { font-size: 8px; margin: -3px 9px 0 0; }
.tray svg { width: 62px; height: 14px; margin-top: 2px; }
.clockt { display: flex; flex-direction: column; align-items: center; width: 50px; margin: 0 3px 0 5px; line-height: 12px; letter-spacing: -.3px; }
.peek { width: 9px; height: 29px; border-left: 1px solid #9a9a8c; background: rgba(255,255,255,.15); }
```
